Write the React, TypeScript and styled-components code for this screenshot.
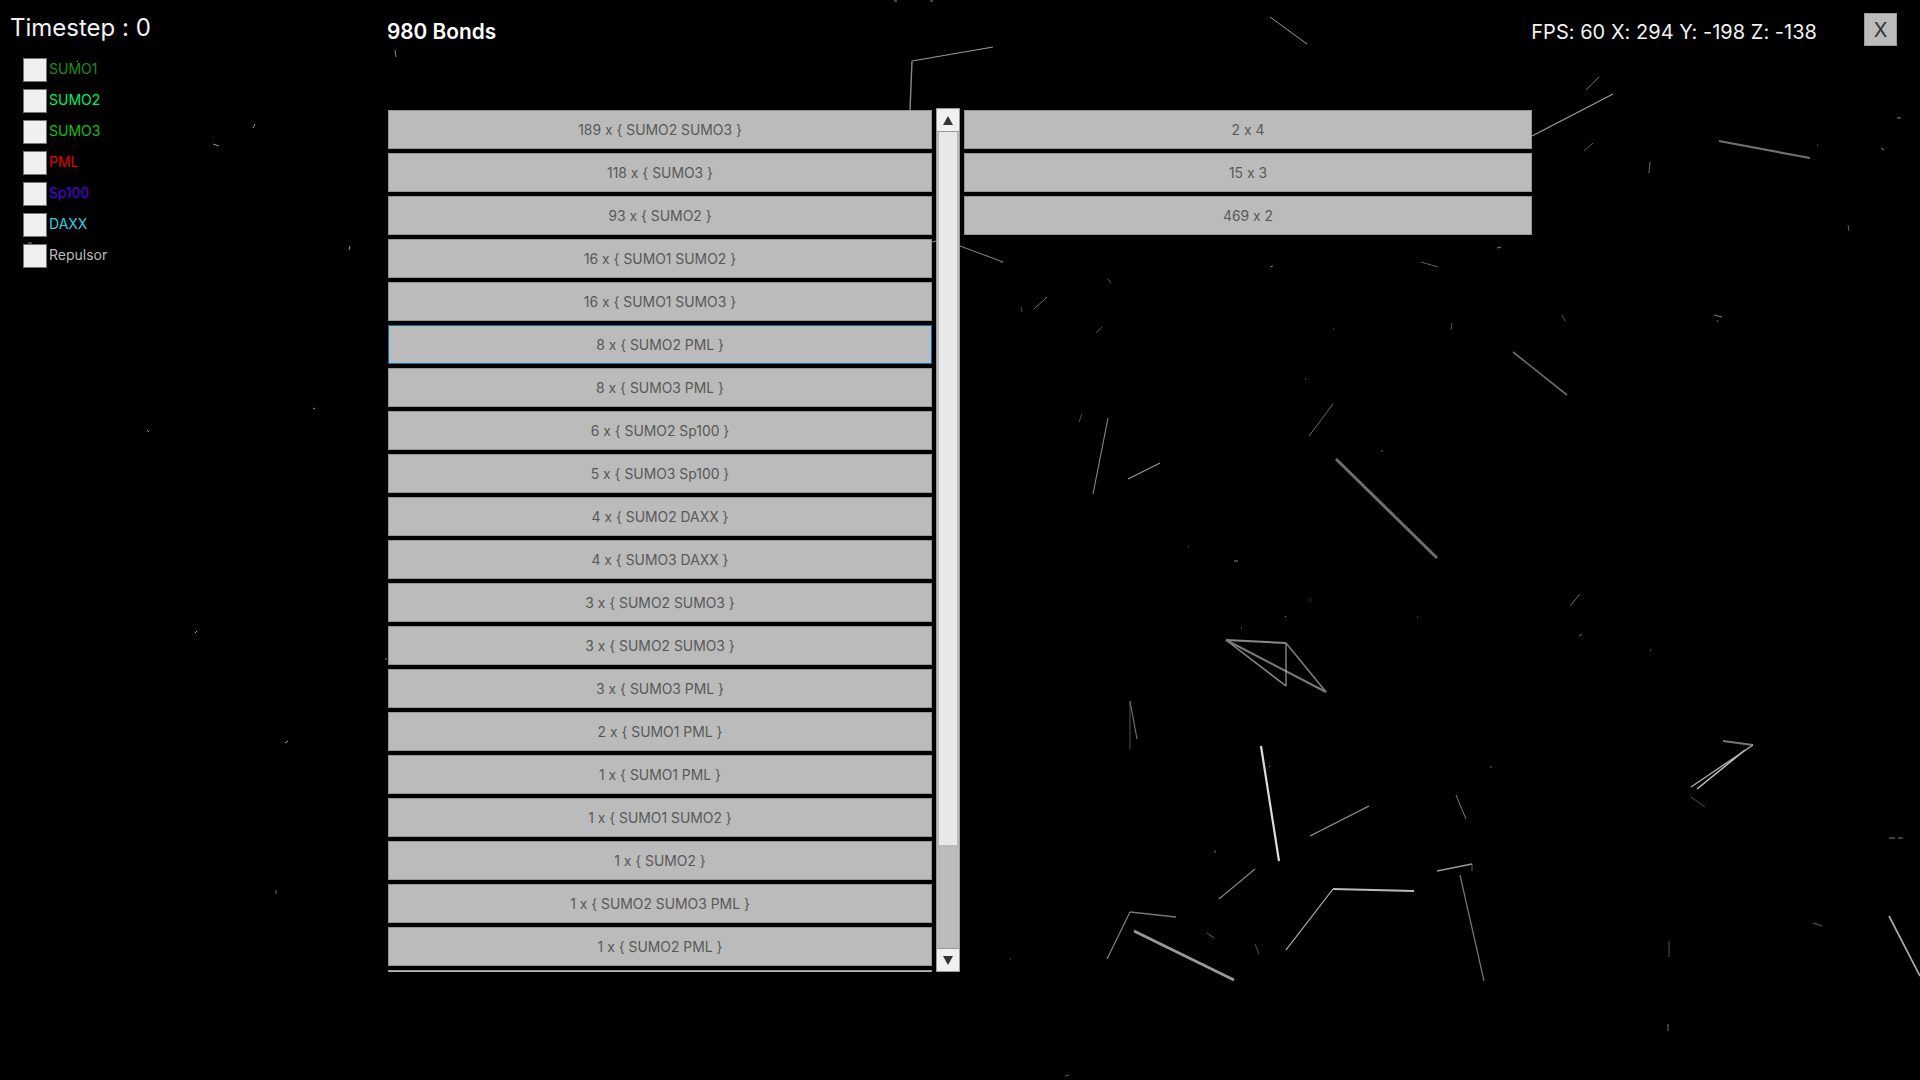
import React from "react";
import styled, { createGlobalStyle } from "styled-components";

const Global = createGlobalStyle`
  html, body { margin: 0; padding: 0; background: #000; height: 100%; overflow: hidden; }
  #root { height: 100%; }
`;

const Page = styled.div`
  position: relative;
  display: flex;
  width: 100%;
  height: 100vh;
  background: #000;
  color: #fff;
  font-family: Inter, "Liberation Sans", sans-serif;
  font-feature-settings: "calt" 0;
  overflow: hidden;
`;

const Scene = styled.svg`
  position: absolute;
  inset: 0;
  width: 100%;
  height: 100%;
`;

const Sidebar = styled.aside`
  position: relative;
  flex: 0 0 388px;
  padding: 13px 0 0 10px;
  box-sizing: border-box;
`;

const Timestep = styled.div`
  font-size: 24px;
  line-height: 29px;
  font-weight: 400;
  color: #f2f2f2;
`;

const Legend = styled.ul`
  list-style: none;
  margin: 16px 0 0 13px;
  padding: 0;
  display: flex;
  flex-direction: column;
  gap: 7px;
`;

const LegendRow = styled.li`
  display: flex;
  align-items: flex-start;
  gap: 2px;
  height: 24px;
`;

const Check = styled.span`
  display: block;
  box-sizing: border-box;
  width: 24px;
  height: 24px;
  background: #f0f0f0;
  border: 1px solid #767676;
`;

const LegendLabel = styled.span<{ $color: string }>`
  color: ${(p) => p.$color};
  font-size: 14px;
  line-height: 21px;
`;

const Main = styled.main`
  position: relative;
  flex: 1;
  display: flex;
  flex-direction: column;
  min-width: 0;
`;

const Header = styled.header`
  height: 108px;
  display: flex;
  align-items: flex-start;
  padding-right: 23px;
`;

const Title = styled.h1`
  flex: 1;
  margin: 20px 0 0 -1px;
  font-size: 20.8px;
  line-height: 24px;
  font-weight: 600;
`;

const Stats = styled.div`
  margin: 20px 47px 0 0;
  font-size: 20px;
  line-height: 24px;
  letter-spacing: 0.02px;
  color: #f2f2f2;
`;

const CloseButton = styled.button`
  box-sizing: border-box;
  width: 33px;
  height: 33px;
  margin-top: 13px;
  padding: 0;
  background: #bbb;
  border: 1px solid #999;
  color: #333;
  font-family: inherit;
  font-feature-settings: inherit;
  font-size: 20px;
`;

const Lists = styled.div`
  display: flex;
  align-items: flex-start;
  gap: 4px;
`;

const ScrollList = styled.div`
  width: 544px;
  height: 864px;
  overflow: hidden;
`;

const PlainList = styled.div`
  width: 568px;
`;

const Item = styled.button<{ $focused?: boolean }>`
  display: block;
  box-sizing: border-box;
  width: 100%;
  height: 39px;
  margin: 2px 0 4px;
  padding: 0;
  background: #bbb;
  border: 1px solid ${(p) => (p.$focused ? "#0a6ea8" : "#959595")};
  color: #585858;
  font-family: inherit;
  font-feature-settings: inherit;
  font-size: 13.9px;
  line-height: 16px;
`;

const Scrollbar = styled.div`
  box-sizing: border-box;
  display: flex;
  flex-direction: column;
  width: 24px;
  height: 864px;
  background: #bbb;
  border: 1px solid #999;
  border-width: 0 1px;
`;

const Arrow = styled.div<{ $down?: boolean }>`
  box-sizing: border-box;
  flex: 0 0 24px;
  margin: 0 -1px;
  display: flex;
  align-items: center;
  justify-content: center;
  background: #f0f0f0;
  border: 1px solid #999;
`;

const Thumb = styled.div`
  flex: 0 0 713px;
  margin: 0 2px;
  background: #e8e8e8;
`;

const TrackRest = styled.div`
  flex: 1;
`;

type L = [number, number, number, number, number, string];

const lines: L[] = [
  [912, 61, 993, 47, 1.2, "#999"], [912, 61, 910, 110, 1.4, "#888"], [1270, 17, 1307, 44, 1, "#999"],
  [894, 1, 897, 1, 1, "#888"], [930, 1, 933, 1, 1, "#888"], [960, 246, 1003, 262, 1, "#888"],
  [932, 242, 936, 241, 1, "#888"], [395, 50, 396, 57, 1, "#888"], [253, 128, 255, 124, 1, "#999"],
  [213, 144, 219, 146, 1, "#999"], [349, 250, 350, 246, 1, "#999"], [28, 243, 32, 243, 1, "#888"],
  [77, 61, 78, 62, 1, "#888"], [313, 408, 315, 409, 1, "#999"], [147, 430, 149, 432, 1, "#999"],
  [195, 633, 197, 631, 1, "#aaa"], [385, 659, 387, 659, 1, "#888"], [285, 743, 288, 741, 1, "#aaa"],
  [276, 890, 276, 894, 1, "#777"],
  [1532, 136, 1613, 94, 1.4, "#999"], [1586, 90, 1599, 77, 0.8, "#888"], [1584, 151, 1593, 143, 0.8, "#777"],
  [1719, 141, 1810, 158, 2.2, "#707070"], [1650, 162, 1649, 173, 0.8, "#888"], [1897, 118, 1901, 118, 1, "#888"],
  [1881, 148, 1884, 150, 1, "#888"], [1848, 225, 1849, 231, 0.8, "#777"], [1817, 145, 1818, 145, 1, "#888"],
  [1497, 248, 1501, 247, 1, "#888"],
  [1513, 352, 1567, 395, 1.7, "#6a6a6a"], [1333, 404, 1309, 436, 0.8, "#888"], [1108, 418, 1093, 494, 1.1, "#888"],
  [1160, 463, 1128, 479, 1.1, "#999"], [1079, 422, 1082, 414, 0.7, "#777"], [1047, 297, 1034, 309, 0.8, "#888"],
  [1021, 307, 1022, 312, 0.7, "#777"], [1108, 279, 1111, 283, 0.8, "#777"], [1096, 333, 1102, 327, 0.7, "#777"],
  [1421, 262, 1438, 267, 0.8, "#777"], [1452, 323, 1451, 330, 0.7, "#777"], [1562, 315, 1565, 321, 0.7, "#777"],
  [1714, 315, 1722, 317, 1, "#888"], [1717, 320, 1718, 322, 0.8, "#888"], [1580, 594, 1570, 606, 0.8, "#888"],
  [1579, 636, 1582, 634, 0.8, "#888"], [1336, 459, 1437, 558, 3, "#6e6e6e"],
  [1381, 451, 1383, 451, 1, "#666"], [1234, 561, 1238, 561, 1, "#888"], [1285, 616, 1286, 617, 1, "#888"],
  [1417, 617, 1418, 617, 1, "#777"], [1241, 628, 1242, 628, 1, "#777"], [1650, 650, 1651, 650, 1, "#777"],
  [1310, 600, 1311, 600, 1, "#777"], [1188, 547, 1189, 547, 1, "#666"], [1305, 379, 1306, 379, 1, "#666"],
  [1270, 267, 1273, 266, 1, "#777"], [1333, 329, 1334, 329, 1, "#666"], [1001, 262, 1003, 262, 1, "#777"],
  [1226, 640, 1286, 643, 2, "#888"], [1226, 640, 1286, 686, 1.5, "#8a8a8a"], [1226, 640, 1326, 692, 2, "#7a7a7a"],
  [1286, 643, 1286, 686, 1, "#bbb"], [1286, 643, 1326, 692, 1.7, "#7a7a7a"],
  [1130, 701, 1137, 739, 1.1, "#777"], [1130, 701, 1130, 749, 0.8, "#666"], [1261, 746, 1279, 861, 2.2, "#ddd"],
  [1369, 806, 1310, 836, 1.2, "#999"], [1456, 795, 1466, 819, 1, "#777"], [1255, 869, 1219, 899, 1.1, "#888"],
  [1472, 864, 1437, 871, 1.4, "#999"], [1472, 864, 1472, 871, 0.8, "#777"], [1460, 875, 1484, 981, 1.2, "#777"],
  [1333, 889, 1414, 891, 2, "#bbb"], [1333, 889, 1286, 950, 1.2, "#bbb"], [1130, 912, 1176, 917, 1.6, "#777"],
  [1130, 912, 1107, 959, 1.1, "#888"], [1134, 931, 1234, 980, 2.8, "#999"], [1207, 933, 1214, 938, 0.8, "#777"],
  [1255, 944, 1259, 954, 0.8, "#666"], [1723, 741, 1753, 745, 2, "#777"], [1753, 745, 1691, 787, 1.4, "#aaa"],
  [1745, 750, 1697, 789, 1.6, "#bbb"], [1691, 797, 1705, 807, 0.8, "#666"], [1889, 838, 1895, 838, 1, "#777"],
  [1898, 838, 1903, 838, 1, "#777"], [1889, 916, 1920, 976, 1.7, "#aaa"], [1813, 923, 1822, 926, 0.8, "#777"],
  [1669, 941, 1669, 957, 0.8, "#666"], [1668, 1024, 1668, 1031, 1, "#777"], [1065, 1076, 1069, 1075, 0.8, "#777"],
  [1010, 959, 1011, 959, 1, "#666"], [1215, 850, 1215, 853, 0.8, "#777"], [1490, 767, 1492, 767, 1, "#666"],
  [1269, 767, 1270, 766, 1, "#666"],
];

const legend = [
  { name: "SUMO1", color: "#1e8c1e" },
  { name: "SUMO2", color: "#00f060" },
  { name: "SUMO3", color: "#14c014" },
  { name: "PML", color: "#e60000" },
  { name: "Sp100", color: "#5000e6" },
  { name: "DAXX", color: "#33d0e0" },
  { name: "Repulsor", color: "#bbbbbb" },
];

const bonds = [
  "189 x { SUMO2 SUMO3 }", "118 x { SUMO3 }", "93 x { SUMO2 }", "16 x { SUMO1 SUMO2 }",
  "16 x { SUMO1 SUMO3 }", "8 x { SUMO2 PML }", "8 x { SUMO3 PML }", "6 x { SUMO2 Sp100 }",
  "5 x { SUMO3 Sp100 }", "4 x { SUMO2 DAXX }", "4 x { SUMO3 DAXX }", "3 x { SUMO2 SUMO3 }",
  "3 x { SUMO2 SUMO3 }", "3 x { SUMO3 PML }", "2 x { SUMO1 PML }", "1 x { SUMO1 PML }",
  "1 x { SUMO1 SUMO2 }", "1 x { SUMO2 }", "1 x { SUMO2 SUMO3 PML }", "1 x { SUMO2 PML }", "",
];

const sizes = ["2 x 4", "15 x 3", "469 x 2"];

export default function App() {
  return (
    <Page>
      <Global />
      <Scene viewBox="0 0 1920 1080" aria-hidden="true">
        {lines.map(([x1, y1, x2, y2, w, c], i) => (
          <line key={i} x1={x1} y1={y1} x2={x2} y2={y2} stroke={c} strokeWidth={w} />
        ))}
      </Scene>
      <Sidebar>
        <Timestep>Timestep : 0</Timestep>
        <Legend>
          {legend.map((l) => (
            <LegendRow key={l.name}>
              <Check />
              <LegendLabel $color={l.color}>{l.name}</LegendLabel>
            </LegendRow>
          ))}
        </Legend>
      </Sidebar>
      <Main>
        <Header>
          <Title>980 Bonds</Title>
          <Stats>FPS: 60 X: 294 Y: -198 Z: -138</Stats>
          <CloseButton>X</CloseButton>
        </Header>
        <Lists>
          <ScrollList>
            {bonds.map((b, i) => (
              <Item key={i} $focused={i === 5}>{b}</Item>
            ))}
          </ScrollList>
          <Scrollbar>
            <Arrow>
              <svg width="10" height="9" viewBox="0 0 10 9"><path d="M5 0 L10 9 L0 9 Z" fill="#333" /></svg>
            </Arrow>
            <Thumb />
            <TrackRest />
            <Arrow $down>
              <svg width="10" height="9" viewBox="0 0 10 9"><path d="M0 0 L10 0 L5 9 Z" fill="#333" /></svg>
            </Arrow>
          </Scrollbar>
          <PlainList>
            {sizes.map((s) => (
              <Item key={s}>{s}</Item>
            ))}
          </PlainList>
        </Lists>
      </Main>
    </Page>
  );
}
